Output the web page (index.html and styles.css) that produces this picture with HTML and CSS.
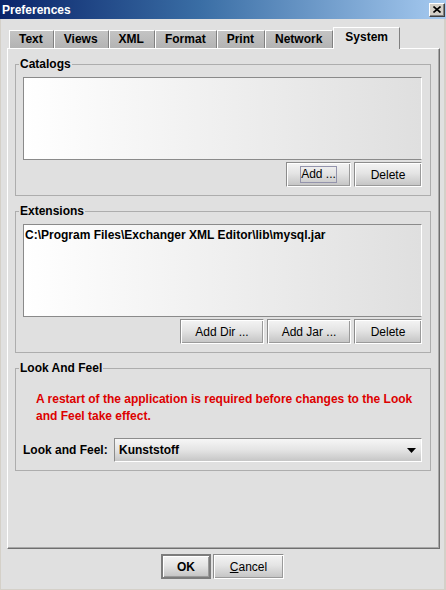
FILE: index.html
```html
<!DOCTYPE html>
<html>
<head>
<meta charset="utf-8">
<title>Preferences</title>
<link rel="stylesheet" href="styles.css">
</head>
<body>
<div class="window">
  <div class="titlebar">
    <span class="title">Preferences</span>
    <span class="close"><svg width="8" height="7" viewBox="0 0 8 7"><path d="M0.5 0.5 L7.5 6.5 M7.5 0.5 L0.5 6.5" stroke="#000" stroke-width="1.6" fill="none"/></svg></span>
  </div>
  <div class="main">
    <div class="tabs">
      <div class="tab">Text</div>
      <div class="tab">Views</div>
      <div class="tab">XML</div>
      <div class="tab">Format</div>
      <div class="tab">Print</div>
      <div class="tab">Network</div>
      <div class="tab active">System</div>
    </div>
    <div class="panel">
      <fieldset class="group">
        <legend>Catalogs</legend>
        <div class="list list-catalogs"></div>
        <div class="btnrow">
          <button class="btn w65"><span class="focus">Add ...</span></button>
          <button class="btn w68">Delete</button>
        </div>
      </fieldset>
      <fieldset class="group">
        <legend>Extensions</legend>
        <div class="list list-ext"><div class="item">C:\Program Files\Exchanger XML Editor\lib\mysql.jar</div></div>
        <div class="btnrow">
          <button class="btn w84">Add Dir ...</button>
          <button class="btn w84">Add Jar ...</button>
          <button class="btn w68">Delete</button>
        </div>
      </fieldset>
      <fieldset class="group">
        <legend>Look And Feel</legend>
        <p class="warning">A restart of the application is required before changes to the Look<br>and Feel take effect.</p>
        <div class="lf-row">
          <span class="lf-label">Look and Feel:</span>
          <div class="combo">
            <span class="combo-value">Kunststoff</span>
            <svg class="combo-arrow" width="9" height="5" viewBox="0 0 9 5"><path d="M0 0 H9 L4.5 5 Z" fill="#000"/></svg>
          </div>
        </div>
      </fieldset>
    </div>
  </div>
  <div class="footer">
    <button class="btn default w50"><b>OK</b></button>
    <button class="btn w71"><u>C</u>ancel</button>
  </div>
</div>
</body>
</html>
```
FILE: styles.css
```css
html, body {
  margin: 0;
  padding: 0;
  background: #e0e0e0;
}

body {
  font-family: "Liberation Sans", Arial, sans-serif;
  font-size: 12px;
  color: #000;
}

.window {
  width: 446px;
  height: 590px;
  display: flex;
  flex-direction: column;
  background: #e0e0e0;
  box-sizing: border-box;
  border-left: 1px solid #d4d0c8;
  border-right: 2px solid #d4d0c8;
  border-bottom: 1px solid #d4d0c8;
}

.titlebar {
  height: 19px;
  flex: none;
  display: flex;
  align-items: center;
  justify-content: space-between;
  padding: 0 1px 0 2px;
  margin-left: -1px;
  margin-right: -2px;
  background: linear-gradient(to right, #0a246a 0%, #3a6ea5 45%, #a6caf0 100%);
  color: #fff;
  font-weight: bold;
  font-size: 12px;
}

.close {
  width: 16px;
  height: 14px;
  box-sizing: border-box;
  background: #d4d0c8;
  border: 1px solid;
  border-color: #fff #404040 #404040 #fff;
  box-shadow: inset -1px -1px 0 #808080;
  display: flex;
  align-items: center;
  justify-content: center;
}

.main {
  flex: 1;
  display: flex;
  flex-direction: column;
  padding: 8px 4px 0 6px;
}

.tabs {
  display: flex;
  align-items: flex-end;
  height: 21px;
  padding-left: 2px;
  flex: none;
}

.tab {
  height: 18px;
  box-sizing: border-box;
  padding: 0 10px 0 9px;
  border-top: 1px solid #fff;
  border-left: 1px solid #fff;
  border-right: 1px solid #808080;
  background: linear-gradient(#c4c4c4, #b3b3b3);
  font-weight: bold;
  line-height: 17px;
}

.tab.active {
  height: 22px;
  margin-bottom: -1px;
  padding: 0 11px;
  background: #e0e0e0;
  line-height: 19px;
  position: relative;
  z-index: 1;
}

.panel {
  flex: 1;
  display: flex;
  flex-direction: column;
  border-top: 1px solid #fff;
  border-left: 1px solid #fff;
  border-right: 1px solid #6f6f6f;
  border-bottom: 1px solid #6f6f6f;
  box-shadow: inset -1px -1px 0 #a8a8a8;
  padding: 8px 8px 0 7px;
}

.group {
  margin: 0;
  min-width: 0;
  border: 1px solid #adadad;
  padding: 6px 8px 8px 7px;
}

.group + .group {
  margin-top: 8px;
}

.group legend {
  padding: 0 1px;
  margin-left: -4px;
  font-weight: bold;
  line-height: 14px;
}

.list {
  box-sizing: border-box;
  border: 1px solid #8a8a8a;
  border-right-color: #fff;
  background: linear-gradient(to right, #ffffff 0%, #dfdfdf 100%);
}

.list-catalogs {
  height: 83px;
}

.list-ext {
  height: 93px;
  padding: 3px 0 0 1px;
}

.item {
  font-weight: bold;
  line-height: 14px;
}

.btnrow {
  display: flex;
  justify-content: flex-end;
  gap: 3px;
  margin-top: 2px;
}

.btn {
  height: 25px;
  box-sizing: border-box;
  padding: 0;
  font-family: "Liberation Sans", Arial, sans-serif;
  font-size: 12px;
  color: #000;
  border: 1px solid;
  border-color: #8c8c8c #ffffff #ffffff #8c8c8c;
  box-shadow: inset 1px 1px 0 #ffffff, inset -1px -1px 0 #9a9a9a;
  background: linear-gradient(#f4f4f4 0%, #e4e4e4 45%, #c3c3c3 100%);
  display: flex;
  align-items: center;
  justify-content: center;
}

.btn.default {
  border: 2px solid #7c7c7c;
  box-shadow: inset 1px 1px 0 #ffffff, inset -1px -1px 0 #9a9a9a;
}

.w50 { width: 50px; }
.w65 { width: 65px; }
.w68 { width: 68px; }
.w71 { width: 71px; }
.w84 { width: 84px; }

.focus {
  display: inline-block;
  border: 1px solid #9494ac;
  padding: 1px 0;
  line-height: 13px;
}

.warning {
  margin: 10px 0 0 13px;
  color: #dd0000;
  font-weight: bold;
  line-height: 17px;
}

.lf-row {
  display: grid;
  grid-template-columns: 91px 1fr;
  align-items: center;
  margin-top: 13px;
}

.lf-label {
  font-weight: bold;
}

.combo {
  height: 24px;
  box-sizing: border-box;
  border: 1px solid;
  border-color: #8c8c8c #ffffff #ffffff #8c8c8c;
  background: linear-gradient(#f6f6f6 0%, #e4e4e4 50%, #c6c6c6 100%);
  display: flex;
  align-items: center;
  justify-content: space-between;
  padding: 0 5px 0 4px;
}

.combo-value {
  font-weight: bold;
}

.footer {
  height: 40px;
  flex: none;
  display: flex;
  justify-content: center;
  align-items: flex-start;
  gap: 2px;
  padding-top: 5px;
  box-sizing: border-box;
}
```
